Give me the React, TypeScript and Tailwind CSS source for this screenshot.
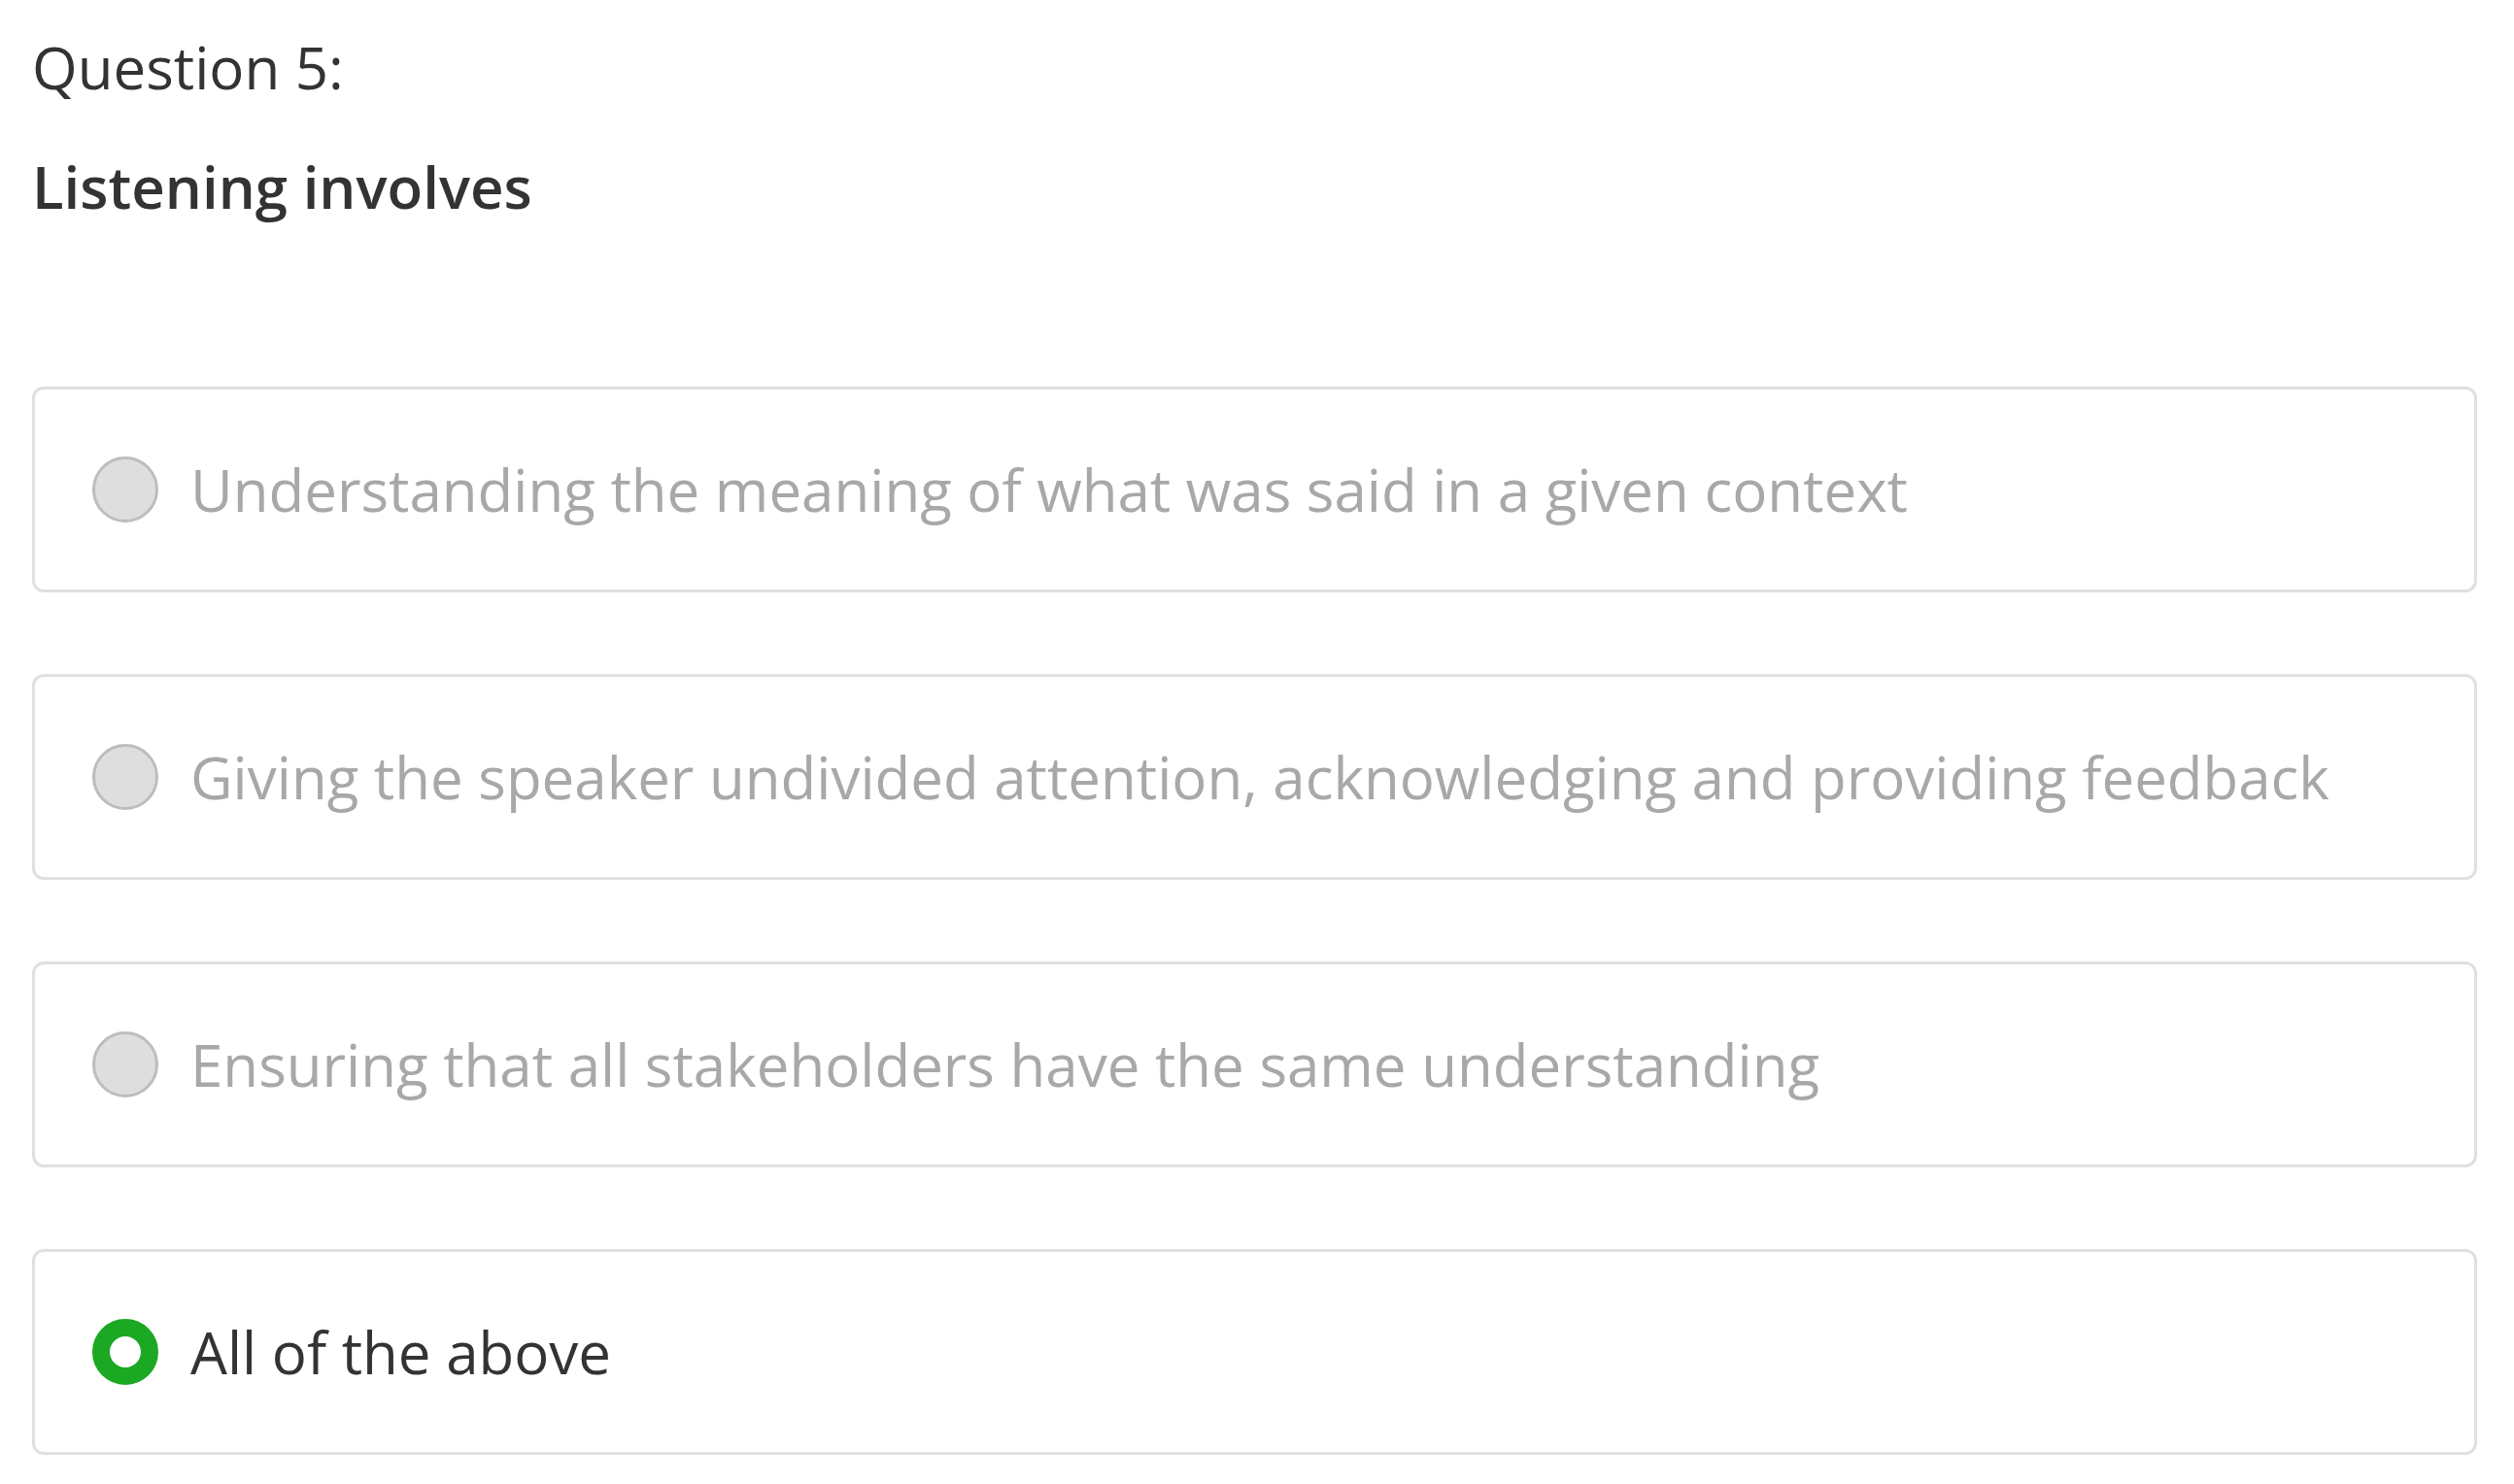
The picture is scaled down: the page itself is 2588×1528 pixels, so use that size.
const options = [
  { label: "Understanding the meaning of what was said in a given context", selected: false },
  { label: "Giving the speaker undivided attention, acknowledging and providing feedback", selected: false },
  { label: "Ensuring that all stakeholders have the same understanding", selected: false },
  { label: "All of the above", selected: true },
]

function Radio({ selected }: { selected: boolean }) {
  if (selected) {
    return <span className="block h-[68px] w-[68px] shrink-0 rounded-full border-[18px] border-[#1ba823] bg-white" />
  }
  return <span className="block h-[68px] w-[68px] shrink-0 rounded-full border-[3px] border-[#bdbdbd] bg-[#dedede]" />
}

export default function App() {
  return (
    <div className="min-h-screen bg-white px-[33px] pt-[28px] font-['Open_Sans',sans-serif] w-[2588px]">
      <h2 className="text-[60px] leading-[82px] text-[#333333]">Question 5:</h2>
      <h3 className="mt-[41px] text-[60px] font-semibold leading-[82px] text-[#333333]">Listening involves</h3>

      <div className="mt-[165px] flex w-[2517px] flex-col gap-[84px]">
        {options.map((o) => (
          <div
            key={o.label}
            className="flex h-[212px] items-center gap-[33px] rounded-[12px] border-[3px] border-[#e0e0e0] bg-white pl-[59px]"
          >
            <Radio selected={o.selected} />
            <span
              className={
                "text-[60px] leading-[82px] " + (o.selected ? "text-[#333333]" : "text-[#a8a8a8]")
              }
            >
              {o.label}
            </span>
          </div>
        ))}
      </div>
    </div>
  )
}
